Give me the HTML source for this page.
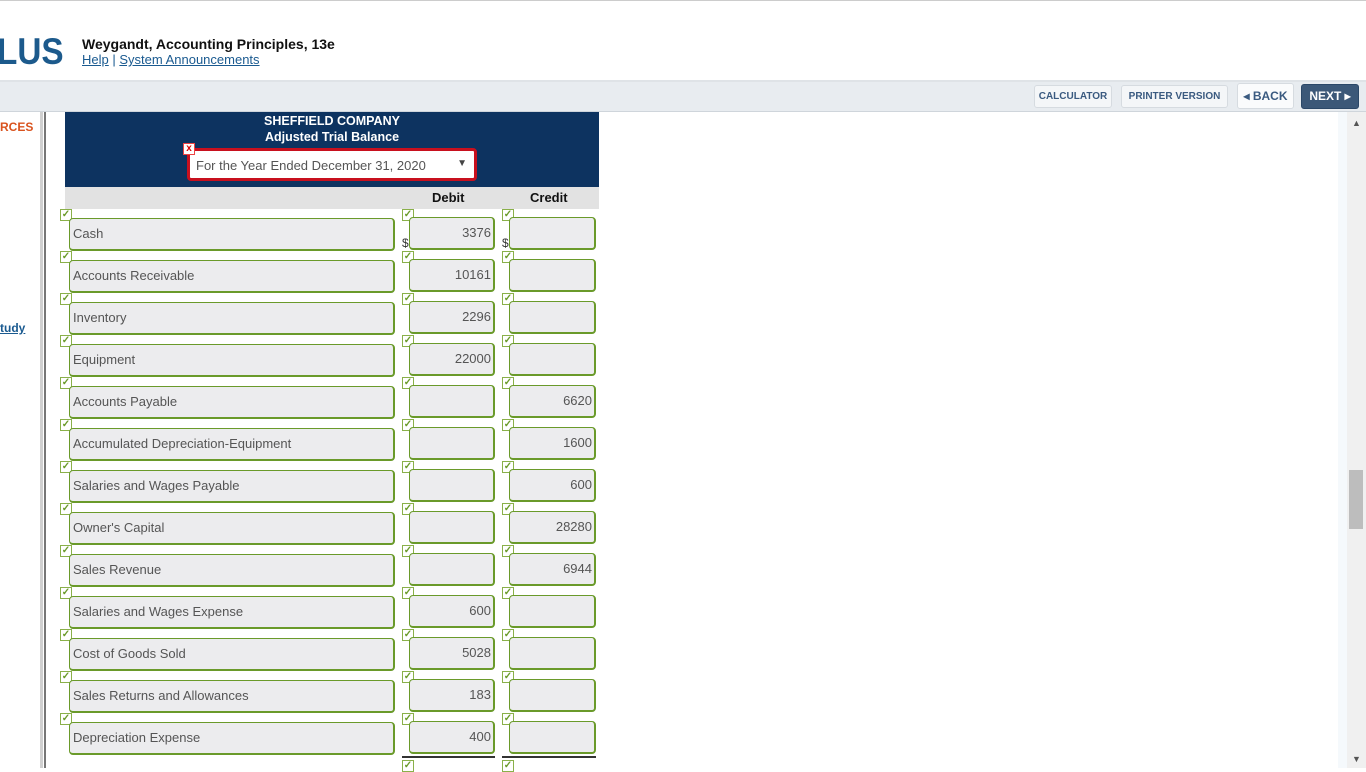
<!DOCTYPE html>
<html><head><meta charset="utf-8"><style>
*{margin:0;padding:0;box-sizing:border-box}
body{width:1366px;height:768px;overflow:hidden;background:#fff;font-family:"Liberation Sans",Tahoma,sans-serif;position:relative}
.a{position:absolute}
.topline{left:0;top:0;width:1366px;height:1px;background:#ccc}
.logo{left:-3px;top:31px;font-size:37px;font-weight:bold;color:#1c5a8c;letter-spacing:0px;transform:scaleX(0.9);transform-origin:left}
.title{left:82px;top:36px;font-size:14px;font-weight:bold;color:#111}
.links{left:82px;top:52px;font-size:13px;color:#1a5a90}
.links u{color:#1a5a90}
.bar{left:0;top:80px;width:1366px;height:32px;background:#e8ecf0;border-top:2px solid #dfe3e7;border-bottom:1px solid #cfd5db}
.btn{top:85px;height:23px;border:1px solid #d6dbe0;border-radius:3px;background:#f4f6f8;font-size:10px;font-weight:bold;color:#3a5a80;text-align:center;line-height:21px}
.side1{left:40px;top:112px;width:3px;height:656px;background:#d0d0d0}
.side2{left:44px;top:112px;width:2px;height:656px;background:#777}
.rces{left:0;top:120px;font-size:12px;font-weight:bold;color:#d9531e}
.tudy{left:0;top:321px;font-size:12px;font-weight:bold;color:#1a5a90;text-decoration:underline}
.hdr{left:65px;top:112px;width:534px;height:75px;background:#0d3360;color:#fff;text-align:center;font-size:12.5px;font-weight:bold;line-height:16px;padding-top:1px}
.sel{left:187px;top:148px;width:290px;height:33px;border:3px solid #c8101e;border-radius:4px;background:#fff}
.sel span{position:absolute;left:6px;top:7px;font-size:13px;color:#555}
.sel i{position:absolute;right:7px;top:7px;font-size:10px;color:#444;font-style:normal}
.xb{left:183px;top:143px;width:12px;height:12px;background:#fff;border:1px solid #e44;color:#d00;font-size:10px;line-height:10px;text-align:center;font-weight:bold}
.gh{left:65px;top:187px;width:534px;height:22px;background:#e2e2e2;font-size:13px;font-weight:bold;color:#111}
.box{height:33px;border:2px solid #6a9a2a;border-top-width:1px;border-left-width:1px;border-radius:4px;background:#ececee;font-size:13px;color:#555;line-height:30px}
.ck{width:12px;height:12px;border:1px solid #8ab04a;background:#fff;color:#6a9a2a;font-size:10px;line-height:10px;text-align:center;font-weight:bold}
.scr{left:1347px;top:112px;width:19px;height:656px;background:#f0f0f0}
.strip{left:1338px;top:112px;width:9px;height:656px;background:#f5f9fc}
</style></head><body>
<div class="a topline"></div>
<div class="a logo">LUS</div>
<div class="a title">Weygandt, Accounting Principles, 13e</div>
<div class="a links"><u>Help</u> | <u>System Announcements</u></div>
<div class="a bar"></div>
<div class="a btn" style="left:1034px;width:78px">CALCULATOR</div>
<div class="a btn" style="left:1121px;width:107px">PRINTER VERSION</div>
<div class="a btn" style="left:1237px;width:57px;top:83px;height:26px;background:#fafbfc;font-size:12px;line-height:24px">◂ BACK</div>
<div class="a btn" style="left:1301px;width:58px;top:84px;height:25px;background:#3c5878;border-color:#2c4868;color:#fff;font-size:12px;line-height:23px">NEXT ▸</div>
<div class="a side1"></div><div class="a side2"></div>
<div class="a rces">RCES</div>
<div class="a tudy">tudy</div>
<div class="a strip"></div>
<div class="a scr"></div>
<div class="a" style="left:1349px;top:470px;width:14px;height:59px;background:#bdbdbd"></div>
<div class="a" style="left:1352px;top:118px;font-size:9px;color:#555">▲</div>
<div class="a" style="left:1352px;top:754px;font-size:9px;color:#555">▼</div>
<div class="a hdr">SHEFFIELD COMPANY<br>Adjusted Trial Balance</div>
<div class="a sel"><span>For the Year Ended December 31, 2020</span><i>▼</i></div>
<div class="a xb">x</div>
<div class="a gh"><span class="a" style="left:367px;top:3px">Debit</span><span class="a" style="left:465px;top:3px">Credit</span></div>
<div class="a" style="left:402px;top:236px;font-size:12px;color:#333">$</div>
<div class="a" style="left:502px;top:236px;font-size:12px;color:#333">$</div>
<div id="rows"></div>
<script>
var d=[["Cash","3376",""],["Accounts Receivable","10161",""],["Inventory","2296",""],["Equipment","22000",""],["Accounts Payable","","6620"],["Accumulated Depreciation-Equipment","","1600"],["Salaries and Wages Payable","","600"],["Owner's Capital","","28280"],["Sales Revenue","","6944"],["Salaries and Wages Expense","600",""],["Cost of Goods Sold","5028",""],["Sales Returns and Allowances","183",""],["Depreciation Expense","400",""]];
var h="";
d.forEach(function(r,i){var y=209+i*42;
h+='<div class="a ck" style="left:60px;top:'+y+'px">✓</div>';
h+='<div class="a ck" style="left:402px;top:'+y+'px">✓</div>';
h+='<div class="a ck" style="left:502px;top:'+y+'px">✓</div>';
h+='<div class="a box" style="left:69px;top:'+(y+9)+'px;width:326px;padding-left:3px">'+r[0]+'</div>';
h+='<div class="a box" style="left:409px;top:'+(y+8)+'px;width:86px;text-align:right;padding-right:2px">'+r[1]+'</div>';
h+='<div class="a box" style="left:509px;top:'+(y+8)+'px;width:87px;text-align:right;padding-right:2px">'+r[2]+'</div>';});
h+='<div class="a" style="left:402px;top:756px;width:93px;height:2px;background:#333"></div>';
h+='<div class="a" style="left:502px;top:756px;width:94px;height:2px;background:#333"></div>';
h+='<div class="a ck" style="left:402px;top:760px">✓</div><div class="a ck" style="left:502px;top:760px">✓</div>';
document.getElementById("rows").innerHTML=h;
</script>
</body></html>
